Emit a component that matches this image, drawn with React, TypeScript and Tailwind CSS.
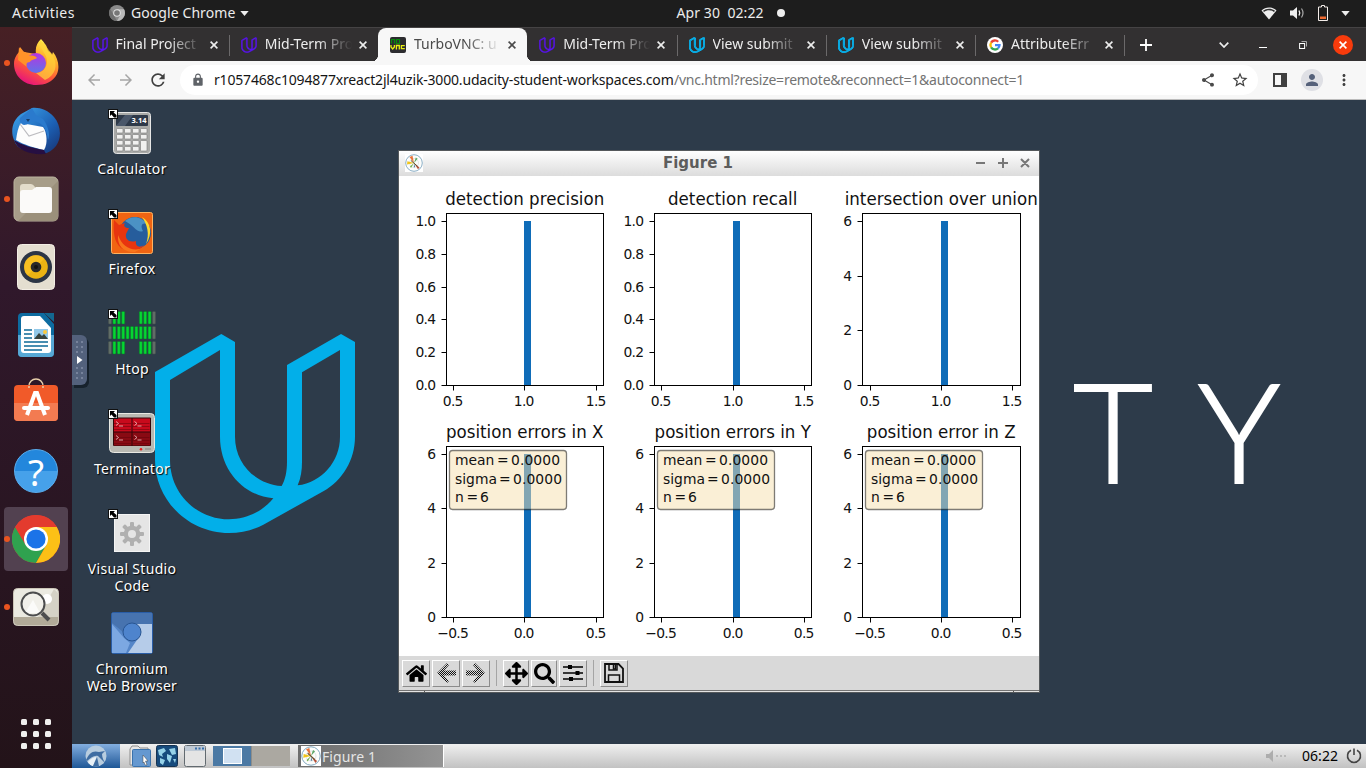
import React from "react";
import {
  MdArrowBack,
  MdArrowForward,
  MdLock,
  MdMoreVert,
  MdPerson,
  MdRefresh,
  MdShare,
  MdStarBorder,
} from "react-icons/md";
import { FaArrowsAlt, FaHome, FaSearch } from "react-icons/fa";

/* ---------- shared marks ---------- */

const U_PATH =
  "M45 156L244 42L285 66V350C285 430 345 492 425 498C436 478 441 455 441 425V135L603 42L645 66V350C645 420 608 480 550 514L370 614C340 630 305 639 267 639C145 639 45 540 45 420ZM90 180V420C90 520 170 598 267 598C320 598 370 573 400 535C310 527 240 450 240 350V90ZM486 157V425C486 450 483 473 473 496C545 487 600 425 600 350V90Z";

function UMark({ className }: { className: string }) {
  return (
    <svg viewBox="45 42 600 597" className={className} fill="currentColor" fillRule="evenodd">
      <path d={U_PATH} />
    </svg>
  );
}

function UFavicon({ color, bold }: { color: string; bold?: boolean }) {
  return (
    <svg viewBox="35 30 620 620" className="size-4" fill={color} stroke={color} strokeWidth={bold ? 38 : 14} fillRule="evenodd">
      <path d={U_PATH} />
    </svg>
  );
}

function NoVnc() {
  return (
    <svg viewBox="0 0 16 16" className="size-4">
      <rect width="16" height="16" rx="2" fill="#2c2c30" />
      <path d="M1.500 6.500V2.500H4.500V6.500M6.500 2.500H9.500V6.500H6.500Z" fill="none" stroke="#078c0c" strokeWidth="1.200" />
      <path d="M1 8V10L2.700 12L4.400 10V8M6.400 12.500V8.500H9.300V12.500M14.800 8.600H11.400V11.700H14.800" fill="none" stroke="#e8ef11" strokeWidth="1.300" />
    </svg>
  );
}

function GoogleMark() {
  return (
    <svg viewBox="0 0 16 16" className="size-4">
      <circle cx="8" cy="8" r="8" fill="#fff" />
      <g fill="none" strokeWidth="2.300">
        <path d="M4.100 5.700A4.500 4.500 0 0 1 11.200 4.800" stroke="#ea4335" />
        <path d="M4.100 10.300A4.500 4.500 0 0 1 4.100 5.700" stroke="#fbbc05" />
        <path d="M11 11.300A4.500 4.500 0 0 1 4.100 10.300" stroke="#34a853" />
        <path d="M8 8.200H12.500A4.500 4.500 0 0 1 11 11.300" stroke="#4285f4" />
      </g>
    </svg>
  );
}

function MplMark({ className }: { className: string }) {
  return (
    <svg viewBox="0 0 18 18" className={className}>
      <rect width="18" height="18" fill="#fff" />
      <circle cx="9" cy="9" r="8.300" fill="#fdfdfb" stroke="#7ea6bf" strokeWidth="0.900" />
      <circle cx="9" cy="9" r="4.500" fill="none" stroke="#c8d0d4" strokeWidth="0.500" />
      <path d="M9 9L4.500 3L7.500 1.800Z" fill="#e8743b" />
      <path d="M9 9L2 10.500L2.400 7.300Z" fill="#f0c419" />
      <path d="M9 9L10.800 3.500L12.700 4.800Z" fill="#5fa868" />
      <path d="M9 9L14.500 13.500L13 15.200Z" fill="#b5523a" />
      <path d="M9 9L6 14L5 12.500Z" fill="#6fae4e" />
      <path d="M9 9L8.800 13.600L10.200 13Z" fill="#5581a0" />
      <path d="M6 6.500L12.500 12.300" stroke="#65502c" strokeWidth="1" />
    </svg>
  );
}

/* ---------- GNOME top bar ---------- */

function TopBar() {
  return (
    <header className="flex h-[27px] shrink-0 items-center bg-[#1d1d1d] pb-px text-sm text-[#ececec]">
      <div className="w-[97px] pl-3 text-[14px] tracking-[0.450px]">Activities</div>
      <div className="flex flex-1 items-center">
        <svg viewBox="0 0 16 16" className="ml-3 size-4">
          <circle cx="8" cy="8" r="8" fill="#8a8a8a" />
          <path d="M8 4.200H15A8 8 0 0 1 8 16L11.300 10Z" fill="#b9b9b9" />
          <path d="M4.700 10L1.200 4A8 8 0 0 0 8 16Z" fill="#707070" />
          <circle cx="8" cy="8" r="3.800" fill="#e2e2e2" />
          <circle cx="8" cy="8" r="2.800" fill="#777" />
        </svg>
        <span className="ml-1.5 w-[104px] whitespace-nowrap tracking-[0.080px]">Google Chrome</span>
        <svg viewBox="0 0 10 6" className="ml-[5px] h-[5px] w-[9px]"><path d="M0 0H10L5 6Z" fill="#eee" /></svg>
      </div>
      <div className="mr-[-22px] ml-[22px] flex w-[140px] items-center whitespace-pre">
        <span className="w-[88px] tracking-[0.080px]">Apr 30  02:22</span>
        <span className="ml-3 size-2 rounded-full bg-[#eee]" />
      </div>
      <div className="flex flex-1 items-center justify-end gap-[13px] pr-[14px]">
        <svg viewBox="0 0 16 13" className="h-[13px] w-4">
          <path d="M.5 3.500C4.500-.4 11.500-.4 15.500 3.500L8 12.500Z" fill="#eee" />
          <path d="M2 3.800C5.500 1 10.500 1 14 3.800L13 5C10 2.500 6 2.500 3 5Z" fill="#333" />
        </svg>
        <svg viewBox="0 0 16 14" className="-ml-px h-3.5 w-4">
          <path d="M1 4.500H4L8 1V13L4 9.500H1Z" fill="#eee" />
          <path d="M10 4.500Q11.500 7 10 9.500" stroke="#eee" fill="none" strokeWidth="1.400" />
          <path d="M12.500 2.500Q15.500 7 12.500 11.500" stroke="#aaa" fill="none" strokeWidth="1.200" />
        </svg>
        <svg viewBox="0 0 10 16" className="h-4 w-2.5">
          <path d="M3.500 .5H6.500V2H9.500V15.500H.5V2H3.500Z" fill="none" stroke="#f3ece8" />
          <rect x="2" y="11.500" width="6" height="2.500" fill="#ee6a31" />
        </svg>
        <svg viewBox="0 0 10 6" className="mr-0.5 h-[5px] w-[9px]"><path d="M0 0H10L5 6Z" fill="#eee" /></svg>
      </div>
    </header>
  );
}

/* ---------- dock ---------- */

function FirefoxIcon() {
  return (
    <svg viewBox="0 0 46 48" className="mb-0.5 h-12 w-[46px]">
      <defs>
        <linearGradient id="ffx" x1="0.800" y1="0" x2="0.300" y2="1">
          <stop offset="0.050" stopColor="#fff44f" />
          <stop offset="0.350" stopColor="#ffb02b" />
          <stop offset="0.650" stopColor="#ff5a36" />
          <stop offset="1" stopColor="#e5107f" />
        </linearGradient>
        <linearGradient id="ffg" x1="0" y1="0" x2="0" y2="1">
          <stop offset="0" stopColor="#b833e1" />
          <stop offset="1" stopColor="#6173e8" />
        </linearGradient>
      </defs>
      <path d="M28 1C32 5 34 9 35 13C37 14 38 15 39 17L40 14C45 20 47 29 44 36C40 44 32 47 23 47C11 47 1 38 1 26C1 20 4 16 7 13L7 9L11 14L23 16C22 9 24 5 28 1Z" fill="url(#ffx)" />
      <circle cx="23" cy="25" r="10" fill="url(#ffg)" />
      <path d="M6 9L9 14C12 13 14 15 16 18C19 17 23 18 24 20C22 22 18 21 17 24C13 24 13 27 14 29L5 22Z" fill="#ff9229" />
      <path d="M27 2C25 10 34 15 34 23C34 30 29 35 23 35L32 42C43 37 45 27 40 18C39 15 34 11 33 7C31 6 28 4 27 2Z" fill="#ffd43b" opacity="0.700" />
    </svg>
  );
}

function ThunderbirdIcon() {
  return (
    <svg viewBox="0 0 48 48" className="size-12">
      <defs>
        <linearGradient id="tb" x1="0" y1="0" x2="1" y2="1">
          <stop offset="0" stopColor="#3fa8ee" />
          <stop offset="0.600" stopColor="#1c60b4" />
          <stop offset="1" stopColor="#17306f" />
        </linearGradient>
      </defs>
      <path d="M20 1C27 0 36 3 42 10C49 18 50 31 44 39C41 43 36 46 31 47C15 45 5 43 2 33C-2 23 1 13 9 7Z" fill="url(#tb)" />
      <path d="M9 16L31 20C35 25 36 37 32 43C23 41 12 38 4 33C5 26 6 20 9 16Z" fill="#fdfdfd" />
      <path d="M8 17L17 29L32 24" stroke="#bcbcc0" fill="none" strokeWidth="1.200" />
      <path d="M20 1L9 10C6 12 8 17 12 18C17 18 19 13 25 15C32 17 35 24 36 33C39 27 35 17 31 12L24 8Z" fill="#2a7acd" />
      <path d="M2 33C10 38 20 41 32 43L34 47C18 48 6 44 2 33Z" fill="#260f42" />
      <path d="M14 12L18 12L16 15Z" fill="#173e6b" />
    </svg>
  );
}

function FilesIcon() {
  return (
    <svg viewBox="0 0 46 46" className="size-[46px]">
      <rect x="1" y="1" width="44" height="44" rx="5" fill="#a79d89" stroke="#bcb49f" />
      <path d="M45 5V41Q45 45 41 45H5L45 5Z" fill="#9b907b" />
      <path d="M7 14V11Q7 8 10 8H18Q20 8 22 11L23 13H36V18H7Z" fill="#e3dccb" />
      <path d="M7 17Q7 14 10 14H19L23 11H36Q39 11 39 14V34Q39 37 36 37H10Q7 37 7 34Z" fill="#fbfaf9" />
    </svg>
  );
}

function RhythmboxIcon() {
  return (
    <svg viewBox="0 0 38 46" className="h-[46px] w-[38px]">
      <rect x="0.500" y="0.500" width="37" height="45" rx="4" fill="#e4ded0" stroke="#f3eee5" />
      <circle cx="19" cy="23" r="16" fill="#2c3545" />
      <circle cx="19" cy="23" r="11.800" fill="#ebb313" />
      <path d="M10.500 14.500A12 12 0 0 0 10.500 31.500L27.500 14.500A12 12 0 0 0 10.500 14.500Z" fill="#ffc72b" opacity="0.600" />
      <circle cx="19" cy="23" r="5.300" fill="#28282a" />
      <circle cx="19" cy="23" r="2" fill="#111" />
    </svg>
  );
}

function WriterIcon() {
  return (
    <svg viewBox="0 0 38 46" className="h-[46px] w-[38px]">
      <path d="M5 1H27L37 12V41Q37 45 33 45H5Q1 45 1 41V5Q1 1 5 1Z" fill="#0d6ba0" />
      <path d="M1 23H37V41Q37 45 33 45H5Q1 45 1 41Z" fill="#57a8d5" />
      <path d="M27 1H37V10Z" fill="#136790" />
      <path d="M7 4H23L34 16V38Q34 41 31 41H7Q4 41 4 38V7Q4 4 7 4Z" fill="#fff" />
      <path d="M7 18H15M7 22H15M7 26H15M7 30H31M7 34H31M7 38H25" stroke="#0c6998" strokeWidth="1.700" />
      <rect x="17" y="17" width="14" height="10" fill="#93c9e9" />
      <path d="M17 27L22 21L25 24L27 22L31 27Z" fill="#37433e" />
      <circle cx="28" cy="20" r="2" fill="#fdc93c" />
    </svg>
  );
}

function SoftwareIcon() {
  return (
    <svg viewBox="0 0 46 46" className="mb-1.5 size-[46px]">
      <path d="M16 11V9A7 7 0 0 1 30 9V11" fill="none" stroke="#e7cfab" strokeWidth="1.500" />
      <rect x="1" y="8" width="44" height="36" rx="4" fill="#f15a29" />
      <path d="M1 26H45V40Q45 44 41 44H5Q1 44 1 40Z" fill="#f37b51" />
      <path d="M16 11V9M30 9V11" fill="none" stroke="#e7cfab" strokeWidth="1.500" />
      <path d="M14 38L22 16H24L32 38" fill="none" stroke="#fff" strokeWidth="4" />
      <rect x="9" y="29" width="28" height="4" rx="2" fill="#fff" />
    </svg>
  );
}

function HelpIcon() {
  return (
    <div className="flex size-11 items-center justify-center rounded-full border border-[#59adee] bg-linear-to-b from-[#2387dc] from-50% to-[#46a1ea] to-50% text-[37px] leading-none text-white">
      ?
    </div>
  );
}

function ChromeIcon() {
  return (
    <svg viewBox="0 0 48 48" className="size-12">
      <circle cx="24" cy="24" r="24" fill="#e33b2e" />
      <path d="M3.200 12A24 24 0 0 0 24 48L34.400 30L24 24H10.200Z" fill="#2fa24f" />
      <path d="M44.800 12A24 24 0 0 1 24 48L34.400 30L24 12Z" fill="#fcc016" />
      <path d="M3.200 12A24 24 0 0 1 44.800 12H24L13.600 30Z" fill="#e33b2e" />
      <circle cx="24" cy="24" r="12" fill="#fff" />
      <circle cx="24" cy="24" r="9.600" fill="#1b73e8" />
    </svg>
  );
}

function ViewerIcon() {
  return (
    <svg viewBox="0 0 46 38" className="h-[38px] w-[46px]">
      <rect x="0.500" y="0.500" width="45" height="37" rx="4" fill="#ebeae1" stroke="#cbc6b8" />
      <path d="M45 5V29H25L41 1Z" fill="#d5d2c6" />
      <path d="M1 29H45V33Q45 37 41 37H5Q1 37 1 33Z" fill="#b1aa98" />
      <circle cx="34" cy="11" r="5" fill="#fff" />
      <path d="M12 25L20 12L27 25Z" fill="#fafaf7" />
      <circle cx="20" cy="16" r="11.500" fill="#fff" fillOpacity="0.300" stroke="#4c4d4e" strokeWidth="2" />
      <path d="M29 25L36 32" stroke="#4c4d4e" strokeWidth="4" />
    </svg>
  );
}

const dockItems: { icon: React.ReactNode; running?: boolean; active?: boolean }[] = [
  { icon: <FirefoxIcon />, running: true },
  { icon: <ThunderbirdIcon /> },
  { icon: <FilesIcon />, running: true },
  { icon: <RhythmboxIcon /> },
  { icon: <WriterIcon /> },
  { icon: <SoftwareIcon /> },
  { icon: <HelpIcon /> },
  { icon: <ChromeIcon />, running: true, active: true },
  { icon: <ViewerIcon />, running: true },
];

function Dock() {
  return (
    <aside className="flex w-[72px] shrink-0 flex-col items-center bg-linear-to-b from-[#472024] via-[#30182b] via-35% to-[#231319] pt-0.5">
      {dockItems.map((item, i) => (
        <div key={i} className="relative flex h-[68px] w-full items-center justify-center">
          {item.running && <span className="absolute left-1 z-10 size-1.5 rounded-full bg-[#e95420]" />}
          <div className={item.active ? "flex size-16 items-center justify-center rounded bg-[#524150]" : "flex size-16 items-center justify-center"}>
            {item.icon}
          </div>
        </div>
      ))}
      <div className="mt-auto mb-[19px] grid grid-cols-3 gap-1.5">
        {Array.from({ length: 9 }, (_, i) => (
          <span key={i} className="size-1.5 rounded-[1.500px] bg-[#f0efee]" />
        ))}
      </div>
    </aside>
  );
}

/* ---------- browser chrome ---------- */

const purple = "#5a14f0";
const cyan = "#08b0ea";

const tabs: { title: string; icon: React.ReactNode; active?: boolean; divider?: boolean }[] = [
  { title: "Final Project", icon: <UFavicon color={purple} />, divider: true },
  { title: "Mid-Term Pro", icon: <UFavicon color={purple} /> },
  { title: "TurboVNC: u", icon: <NoVnc />, active: true },
  { title: "Mid-Term Pro", icon: <UFavicon color={purple} />, divider: true },
  { title: "View submit", icon: <UFavicon color={cyan} bold />, divider: true },
  { title: "View submit", icon: <UFavicon color={cyan} bold />, divider: true },
  { title: "AttributeErr", icon: <GoogleMark />, divider: true },
];

function CloseGlyph({ className }: { className: string }) {
  return (
    <svg viewBox="0 0 8 8" className={className}>
      <path d="M.6 .6L7.400 7.400M7.400 .6L.6 7.400" stroke="currentColor" strokeWidth="1.600" />
    </svg>
  );
}

function Tab({ tab }: { tab: (typeof tabs)[number] }) {
  return (
    <div
      className={
        tab.active
          ? "relative flex h-[34px] w-[149.250px] items-center rounded-t-lg bg-[#f7f7f7] pl-3 text-[#4a4a4a] before:absolute before:bottom-0 before:-left-2 before:size-2 before:bg-[radial-gradient(circle_at_0_0,transparent_8px,#f7f7f7_8.500px)] after:absolute after:-right-2 after:bottom-0 after:size-2 after:bg-[radial-gradient(circle_at_100%_0,transparent_8px,#f7f7f7_8.500px)]"
          : "relative flex h-[34px] w-[149.250px] items-center pl-3 text-[#ededed]"
      }
    >
      {tab.icon}
      <span className="ml-2 w-[87px] mask-r-from-60% pb-0.5 text-[14px] whitespace-nowrap">{tab.title}</span>
      <CloseGlyph className="ml-[7px] size-2" />
      {tab.divider && <span className="absolute top-[7px] right-[-1px] h-[21px] w-px bg-[#6b696a]" />}
    </div>
  );
}

function TabStrip() {
  return (
    <div className="flex h-[34px] shrink-0 items-center border-t border-[#454344] bg-[#323031] pl-[7.500px]">
      {tabs.map((tab, i) => (
        <Tab key={i} tab={tab} />
      ))}
      <svg viewBox="0 0 12 12" className="ml-4 size-3"><path d="M6 0V12M0 6H12" stroke="#fff" strokeWidth="1.800" /></svg>
      <div className="flex flex-1 items-center justify-end pr-[13px] text-white">
        <svg viewBox="0 0 10 6" className="h-1.5 w-2.5"><path d="M.7 .7L5 5L9.300 .7" fill="none" stroke="#eee" strokeWidth="1.700" /></svg>
        <span className="mt-[5px] ml-[30px] h-px w-2 bg-white" />
        <svg viewBox="0 0 8 8" className="ml-8 size-2">
          <path d="M2.500 .5H7.500V5.500" fill="none" stroke="#aaa" />
          <rect x="0.600" y="2.500" width="5" height="5" fill="none" stroke="#fff" />
        </svg>
        <span className="ml-[26px] flex size-5 items-center justify-center rounded-full bg-[#f83b0c]">
          <CloseGlyph className="size-2" />
        </span>
      </div>
    </div>
  );
}

function AddressRow() {
  return (
    <div className="flex h-[39px] shrink-0 items-center border-b border-[#bcbcbc] bg-[#f7f7f7] pl-[13px]">
      <MdArrowBack className="size-[18px] text-[#a6a6a6]" />
      <MdArrowForward className="ml-3.5 size-[18px] text-[#a6a6a6]" />
      <MdRefresh className="ml-[13px] size-5 text-[#404040]" />
      <div className="ml-[12px] flex h-[30px] w-[1078px] items-center rounded-full bg-white pr-[9px] pl-[11px]">
        <MdLock className="size-[14px] text-[#5f6368]" />
        <div className="ml-[9px] flex-1 pb-0.5 text-[14px] whitespace-nowrap">
          <span className="inline-block w-[460px] tracking-[-0.180px] text-[#151515]">r1057468c1094877xreact2jl4uzik-3000.udacity-student-workspaces.com</span>
          <span className="tracking-[-0.250px] text-[#737373]">/vnc.html?resize=remote&amp;reconnect=1&amp;autoconnect=1</span>
        </div>
        <MdShare className="size-4 text-[#4a4a4a]" />
        <MdStarBorder className="ml-[15px] size-[18px] text-[#404040]" />
      </div>
      <svg viewBox="0 0 14 14" className="ml-[15px] size-3.5">
        <path d="M1 1H13V13H1Z" fill="none" stroke="#404040" strokeWidth="2" />
        <rect x="8" width="6" height="14" fill="#404040" />
      </svg>
      <span className="ml-3.5 flex size-[22px] items-center justify-center rounded-full bg-[#dfe0e5] text-[#55617a]">
        <MdPerson className="size-[18px]" />
      </span>
      <MdMoreVert className="ml-3 size-[18px] text-[#404040]" />
    </div>
  );
}

/* ---------- remote desktop ---------- */

function CalcIcon() {
  return (
    <svg viewBox="0 0 38 42" className="h-[42px] w-[38px]">
      <rect x="0.500" y="0.500" width="37" height="41" rx="3" fill="#a9aaa8" stroke="#e6e6e6" />
      <rect x="3" y="3" width="32" height="11" rx="1" fill="#2e3949" />
      <path d="M3 14L12 3H20L12 14Z" fill="#66758b" opacity="0.500" />
      <text x="33.500" y="11.300" textAnchor="end" fontSize="7.500" fontWeight="700" fill="#fff" textLength="15">3.14</text>
      {[0, 1, 2, 3].map((r) =>
        [0, 1, 2, 3].map((c) =>
          c === 3 && r === 3 ? null : (
            <rect key={`${r}${c}`} x={3.5 + c * 8} y={16.5 + r * 6} width="6.500" height={c === 3 && r === 2 ? 10.500 : 4.500} rx="0.800" fill="#f1f1f0" stroke="#777" strokeWidth="0.600" />
          ),
        )
      )}
    </svg>
  );
}

function OldFirefoxIcon() {
  return (
    <svg viewBox="0 0 42 42" className="size-[42px]">
      <rect x="0.500" y="0.500" width="41" height="41" rx="2" fill="#f06412" stroke="#ffb25f" />
      <circle cx="24" cy="21" r="16" fill="#265d9c" />
      <path d="M14 9C20 3 31 4 36 12C31 10 29 14 32 19C27 22 22 13 14 9Z" fill="#4b92c4" />
      <path d="M3 8L8 13L14 11C12 14 14 16 18 16L15 22C14 27 18 31 25 29C24 35 29 36 33 33C29 39 18 41 10 36C3 30 2 20 3 8Z" fill="#e8350f" />
      <path d="M31 5C40 10 42 22 35 32C39 22 36 12 31 5Z" fill="#ffd92b" />
      <path d="M7 23C11 34 19 39 29 37L24 40C13 41 6 34 7 23Z" fill="#f8761c" />
    </svg>
  );
}

function HtopIcon() {
  const cols = Array.from({ length: 11 }, (_, i) => i);
  return (
    <svg viewBox="0 0 48 44" className="h-11 w-12">
      {[0, 15, 30].map((y, row) =>
        cols.map((c) =>
          row !== 1 && c > 3 && c < 7 ? null : (
            <rect key={`${row}${c}`} x={0.5 + c * 4.4} y={y + 0.5} width="3" height="12.500" rx="0.700" fill={c === 0 || c === 10 ? "#606d66" : "#06d632"} stroke={c === 0 || c === 10 ? "#46514d" : "#087b28"} strokeWidth="0.500" />
          ),
        ),
      )}
    </svg>
  );
}

function TerminatorIcon() {
  return (
    <svg viewBox="0 0 46 40" className="h-10 w-[46px]">
      <rect x="0.500" y="0.500" width="45" height="39" rx="4" fill="#b9b9b2" stroke="#e9e9e3" />
      <rect x="4" y="4.500" width="38" height="28.500" rx="1" fill="#33070a" />
      {[[5, 5.500], [23.500, 5.500], [5, 19.500], [23.500, 19.500]].map(([x, y], i) => (
        <g key={i}>
          <rect x={x} y={y} width="17.500" height="13" fill={i < 2 ? "#c80a1c" : "#890a13"} />
          <path d={`M${x} ${y + 8}h17M${x} ${y + 5}h17M${x} ${y + 11}h17`} stroke="#61030b" strokeWidth="0.500" />
          <path d={`M${x + 2} ${y + 3}l2.500 2l-2.500 2M${x + 5} ${y + 7.500}h4`} fill="none" stroke="#f4c8c8" strokeWidth="0.800" />
        </g>
      ))}
      <circle cx="32" cy="36.300" r="1.300" fill="#eb2020" />
      <path d="M36 36H42" stroke="#85857e" />
    </svg>
  );
}

function GearIcon() {
  return (
    <svg viewBox="0 0 36 38" className="h-[38px] w-9">
      <rect x="0.500" y="0.500" width="35" height="37" fill="#e5e5e5" stroke="#f4f4f4" />
      <g transform="translate(18 20)" fill="#b0b0b0">
        {[0, 45, 90, 135].map((a) => (
          <rect key={a} x="-2" y="-12" width="4" height="24" rx="1" transform={`rotate(${a})`} />
        ))}
        <circle r="8.300" />
        <circle r="4" fill="#e5e5e5" />
      </g>
    </svg>
  );
}

function ChromiumIcon() {
  return (
    <svg viewBox="0 0 42 42" className="size-[42px]">
      <rect x="0.500" y="0.500" width="41" height="41" rx="2" fill="#5586c8" stroke="#295da7" />
      <path d="M1 12L13 26L19 31L15 41H1Z" fill="#7ca8e2" />
      <path d="M21 12H41V41H17L28 25Z" fill="#b6cce9" />
      <path d="M1 1H41V12H20L12 20L1 11Z" fill="#4773af" />
      <circle cx="21" cy="20" r="9" fill="#4e84cd" stroke="#285592" />
    </svg>
  );
}

const shortcuts: { label: string; icon: React.ReactNode; link?: boolean }[] = [
  { label: "Calculator", icon: <CalcIcon />, link: true },
  { label: "Firefox", icon: <OldFirefoxIcon />, link: true },
  { label: "Htop", icon: <HtopIcon />, link: true },
  { label: "Terminator", icon: <TerminatorIcon />, link: true },
  { label: "Visual Studio Code", icon: <GearIcon />, link: true },
  { label: "Chromium Web Browser", icon: <ChromiumIcon /> },
];

function Shortcuts() {
  return (
    <div className="absolute top-[9px] left-[10px] flex w-[100px] flex-col">
      {shortcuts.map((s) => (
        <div key={s.label} className="relative flex h-[100px] flex-col items-center">
          <div className="flex h-[47px] items-center justify-center">{s.icon}</div>
          {s.link && (
            <svg viewBox="0 0 10 10" className="absolute top-0 left-[26px] size-2.5">
              <rect x="0.500" y="0.500" width="9" height="9" fill="#fff" stroke="#111" />
              <path d="M2 2H7L5.500 3.500L8.500 6V8.500H6L3.500 5.500L2 7Z" fill="#000" />
            </svg>
          )}
          <div className="mt-1 text-center text-[14px] leading-[17px] tracking-[0.300px] text-white [text-shadow:1px_1px_1px_#000]">{s.label}</div>
        </div>
      ))}
    </div>
  );
}

/* ---------- figure ---------- */

interface Axes {
  title: string;
  left: number;
  right: number;
  top: number;
  bottom: number;
  bar: number;
  yTicks: [number, string][];
  xTicks: [number, string][];
  stats?: boolean;
}

const unit: [number, string][] = [[221.5, "1.0"], [254.5, "0.8"], [287.5, "0.6"], [319.5, "0.4"], [352.5, "0.2"], [385.5, "0.0"]];
const countTop: [number, string][] = [[221.5, "6"], [276.5, "4"], [330.5, "2"], [385.5, "0"]];
const countLow: [number, string][] = [[454.5, "6"], [508.5, "4"], [563.5, "2"], [617.5, "0"]];

const axes: Axes[] = [
  { title: "detection precision", left: 446.5, right: 603.5, top: 213.5, bottom: 385.5, bar: 524, yTicks: unit, xTicks: [[453.5, "0.5"], [524.5, "1.0"], [596.5, "1.5"]] },
  { title: "detection recall", left: 654.5, right: 811.5, top: 213.5, bottom: 385.5, bar: 733, yTicks: unit, xTicks: [[661.5, "0.5"], [733.5, "1.0"], [804.5, "1.5"]] },
  { title: "intersection over union", left: 862.5, right: 1020.5, top: 213.5, bottom: 385.5, bar: 941, yTicks: countTop, xTicks: [[870.5, "0.5"], [941.5, "1.0"], [1012.5, "1.5"]] },
  { title: "position errors in X", left: 446.5, right: 603.5, top: 446.5, bottom: 617.5, bar: 524, yTicks: countLow, xTicks: [[453.5, "−0.5"], [524.5, "0.0"], [596.5, "0.5"]], stats: true },
  { title: "position errors in Y", left: 654.5, right: 811.5, top: 446.5, bottom: 617.5, bar: 733, yTicks: countLow, xTicks: [[661.5, "−0.5"], [733.5, "0.0"], [804.5, "0.5"]], stats: true },
  { title: "position error in Z", left: 862.5, right: 1020.5, top: 446.5, bottom: 617.5, bar: 941, yTicks: countLow, xTicks: [[870.5, "−0.5"], [941.5, "0.0"], [1012.5, "0.5"]], stats: true },
];

function StatLine({ x, y, name, value, eq, val, end }: { x: number; y: number; name: string; value: string; eq: number; val: number; end: number }) {
  return (
    <text y={y}>
      <tspan x={x}>{name}</tspan>
      <tspan x={x + eq}>=</tspan>
      <tspan x={x + val} textLength={end - val}>{value}</tspan>
    </text>
  );
}

function Plot({ a }: { a: Axes }) {
  const barTop = a.yTicks[0][0] - 0.5;
  const cx = (a.left + a.right) / 2 - 0.3;
  return (
    <g fill="#111">
      <text transform={`translate(${cx} ${a.top - 8.5}) scale(1 1.09)`} textAnchor="middle" fontSize="16.670">{a.title}</text>
      <rect x={a.bar} y={barTop} width="7" height={a.bottom - barTop} fill="#0f6cb8" />
      <rect x={a.left} y={a.top} width={a.right - a.left} height={a.bottom - a.top} fill="none" stroke="#000" />
      {a.yTicks.map(([y, t]) => (
        <g key={t}>
          <path d={`M${a.left - 5} ${y}h5`} stroke="#000" />
          <text x={a.left - 10.5} y={y + 4.5} textAnchor="end" fontSize="13.890" textLength={t.length > 1 ? 20.5 : undefined}>{t}</text>
        </g>
      ))}
      {a.xTicks.map(([x, t]) => (
        <g key={t}>
          <path d={`M${x} ${a.bottom}v5`} stroke="#000" />
          <text x={x - 0.4} y={a.bottom + 20.5} textAnchor="middle" fontSize="13.890" textLength={t.length > 3 ? 31.5 : 20.5}>{t}</text>
        </g>
      ))}
      {a.stats && (
        <g fontSize="13.890">
          <rect x={a.left + 3} y={a.top + 4} width="117" height="59" rx="3" fill="#f5dfad" fillOpacity="0.500" stroke="#000" strokeOpacity="0.500" strokeWidth="1.300" />
          <StatLine x={a.left + 8.5} y={a.top + 18.5} name="mean" value="0.0000" eq={42} val={56} end={105} />
          <StatLine x={a.left + 8.5} y={a.top + 37.5} name="sigma" value="0.0000" eq={44} val={58} end={107} />
          <StatLine x={a.left + 8.5} y={a.top + 55.5} name="n" value="6" eq={11.5} val={25} end={34} />
        </g>
      )}
    </g>
  );
}

function ArrowGlyph({ flip }: { flip?: boolean }) {
  return (
    <svg viewBox="0 0 20 20" className={flip ? "size-5 -scale-x-100" : "size-5"}>
      <defs>
        <pattern id="dither" width="2" height="2" patternUnits="userSpaceOnUse">
          <rect width="1" height="1" fill="#111" />
          <rect x="1" y="1" width="1" height="1" fill="#111" />
        </pattern>
      </defs>
      <path d="M11 0L1 10L11 20L13 18L8 12.500H20V7.500H8L13 2Z" fill="url(#dither)" />
    </svg>
  );
}

function ToolButton({ children, narrow }: { children: React.ReactNode; narrow?: boolean }) {
  return (
    <span
      className={
        narrow
          ? "flex h-[27px] w-[26px] items-center justify-center border border-t-white border-r-[#8c8c8c] border-b-[#8c8c8c] border-l-white"
          : "flex h-[27px] w-7 items-center justify-center border border-t-white border-r-[#8c8c8c] border-b-[#8c8c8c] border-l-white"
      }
    >
      {children}
    </span>
  );
}

function FigureToolbar() {
  return (
    <div className="flex h-[34px] items-center gap-0.5 bg-[#d9d9d9] pl-[3px] text-black">
      <ToolButton><FaHome className="size-[21px]" /></ToolButton>
      <ToolButton><ArrowGlyph /></ToolButton>
      <ToolButton><ArrowGlyph flip /></ToolButton>
      <span className="mr-1 ml-1 h-[26px] w-px bg-[#a5a5a5]" />
      <ToolButton narrow><FaArrowsAlt className="size-[23px] shrink-0" /></ToolButton>
      <ToolButton narrow><FaSearch className="size-[21px]" /></ToolButton>
      <ToolButton>
        <svg viewBox="0 0 20 18" className="h-[18px] w-5">
          <path d="M0 3H20M0 9H20M0 15H20" stroke="#000" strokeWidth="1.600" />
          <path d="M5 1H9V5H5ZM12.500 7H16.500V11H12.500ZM6 13H10V17H6Z" />
        </svg>
      </ToolButton>
      <span className="mr-1 ml-1 h-[26px] w-px bg-[#a5a5a5]" />
      <ToolButton>
        <svg viewBox="0 0 20 20" className="size-5" fill="none" stroke="#111" strokeWidth="1.800">
          <path d="M1 1H14.500L19 5.500V19H1Z" />
          <path d="M5 1.500V7H13V1.500M4.500 19V12H15.500V19" strokeWidth="1.500" />
          <path d="M9.500 2V6H11.500V2" strokeWidth="1.500" />
        </svg>
      </ToolButton>
    </div>
  );
}

function FigureWindow() {
  return (
    <section className="absolute top-[50px] left-[326px] w-[642px] border border-[#55595c] bg-[#d9d9d9]">
      <div className="flex h-[25px] items-center bg-linear-to-b from-white to-[#dcdcdc] pr-[9px] pb-px pl-1.5">
        <MplMark className="size-[18px]" />
        <h1 className="flex-1 pr-[3px] text-center font-['DejaVu_Sans',sans-serif] text-[15px] font-bold text-[#5d5d5d]">Figure 1</h1>
        <svg viewBox="0 0 54 10" className="h-2.5 w-[54px]" stroke="#777" strokeWidth="2" fill="none">
          <path d="M0 5H9M22 5H32M27 0V10M45 1L53 9M53 1L45 9" />
        </svg>
      </div>
      <svg viewBox="399 176 640 480" className="block h-[480px] w-[640px] bg-white font-['DejaVu_Sans',sans-serif]">
        {axes.map((a) => (
          <Plot key={a.title} a={a} />
        ))}
      </svg>
      <FigureToolbar />
      <div className="flex h-0.5 border-t border-[#737373] bg-[#e4e4e4]">
        <span className="w-[26px] border-r border-[#555]" />
        <span className="flex-1" />
        <span className="w-[26px] border-l border-[#555]" />
      </div>
    </section>
  );
}

function Panel() {
  return (
    <footer className="flex h-6 shrink-0 items-center bg-linear-to-b from-[#f0f0f0] to-[#c2c2c2]">
      <span className="flex h-full w-12 items-center justify-center bg-linear-to-b from-[#83afe0] to-[#1d5796]">
        <svg viewBox="0 0 22 22" className="size-[22px]">
          <circle cx="11" cy="11" r="10.500" fill="#b8cddf" />
          <path d="M1 15C4 8 8 5 14 7L20 6L17 9C17 13 19 16 20 18L13 11C9 10 6 13 2 16Z" fill="#3f6da2" />
          <path d="M3 17Q7 12 11.500 12L8 21Q4.500 20 3 17Z" fill="#e9f1f7" />
          <path d="M12 12L8 21Q11 22 14 21Z" fill="#3f6da2" />
        </svg>
      </span>
      <svg viewBox="0 0 22 22" className="ml-[9px] size-[22px]">
        <path d="M1 20V4L3 1H9L11 3H19V20Z" fill="#e6e6e6" stroke="#8d8d8d" />
        <rect x="3.500" y="4.500" width="18" height="17" rx="1" fill="#6598d0" stroke="#3972ad" />
        <path d="M14 10L19 16L16.500 16L18 20L16 20L15 17L14 18Z" fill="#fff" stroke="#444" strokeWidth="0.500" />
      </svg>
      <svg viewBox="0 0 22 22" className="ml-[5px] size-[22px]">
        <rect x="0.500" y="0.500" width="21" height="21" rx="2" fill="#164b7d" stroke="#163351" />
        <path d="M2 5L8 3L10 6L6 9L7 12L3 10ZM13 4L19 3L20 9L16 10ZM11 9L16 11L14 18L11 14ZM4 13L9 15L7 20L4 18ZM17 14L20 14L19 18Z" fill="#96d2e8" />
      </svg>
      <svg viewBox="0 0 22 22" className="ml-1.5 size-[22px]">
        <rect x="0.500" y="0.500" width="21" height="21" rx="2" fill="#e4e4e4" stroke="#626a70" />
        <path d="M1 1H21V6H1Z" fill="#bec9d5" />
        <path d="M11 3.500H13M14.500 3.500H16.500M18 3.500H20" stroke="#376fac" strokeWidth="2" />
      </svg>
      <span className="ml-[7px] flex h-5 w-[38px] items-center justify-center bg-[#4b79a4]">
        <span className="h-4 w-[19px] border border-white bg-[#d1e1f2]" />
      </span>
      <span className="h-5 w-[39px] border-l border-[#8e8d89] bg-[#aba8a1]" />
      <span className="ml-2 flex h-[22px] w-[146px] items-center border-r border-white bg-linear-to-r from-[#6d6d6d] to-[#949494] pl-[3px] text-[14px] tracking-[0.100px] text-[#e5e5e5]">
        <MplMark className="mr-px size-5" />
        Figure 1
      </span>
      <span className="ml-auto flex items-center text-[14px] text-black">
        <svg viewBox="0 0 22 14" className="h-3.5 w-[22px]">
          <path d="M1 5H4L8 1V13L4 9H1Z" fill="#adadad" />
          <path d="M11 7H13M15 7H17M19 7H21" stroke="#999" />
        </svg>
        <span className="ml-[15px] w-9 pb-0.5 tracking-[0.050px]">06:22</span>
        <svg viewBox="0 0 16 16" className="mr-1 ml-2 size-4" fill="none" stroke="#444" strokeWidth="1.600">
          <path d="M5 2.200A6.500 6.500 0 1 0 11 2.200M8 .5V7" />
        </svg>
      </span>
    </footer>
  );
}

function RemoteDesktop() {
  return (
    <div className="relative flex-1 overflow-hidden bg-[#2d3b4a]">
      <UMark className="absolute top-[234px] left-[83px] h-[199px] w-[200px] text-[#02afe9]" />
      <span className="absolute top-[249px] left-[1001px] font-[Lato] text-[138px] leading-[162px] font-light text-white [-webkit-text-stroke:2px_white]">T</span>
      <span className="absolute top-[249px] left-[1126px] font-[Lato] text-[138px] leading-[162px] font-light text-white [-webkit-text-stroke:2px_white]">Y</span>
      <Shortcuts />
      <div className="absolute top-[235px] left-0 flex h-[50px] w-[15px] items-center justify-center rounded-r-md bg-[#53617c] shadow-[2px_3px_0_#17222d]">
        <svg viewBox="0 0 15 50" className="h-[50px] w-[15px]">
          {[7, 12, 17, 33, 38, 43].map((y) => (
            <path key={y} d={`M4 ${y}h2M9 ${y}h2`} stroke="#76829b" strokeWidth="2" />
          ))}
          <path d="M5 21L10.500 25L5 29Z" fill="#fff" />
        </svg>
      </div>
      <FigureWindow />
    </div>
  );
}

export default function App() {
  return (
    <div className="flex h-[768px] w-[1366px] flex-col overflow-hidden font-['Noto_Sans',sans-serif]">
      <TopBar />
      <div className="flex min-h-0 flex-1">
        <Dock />
        <main className="flex min-w-0 flex-1 flex-col">
          <TabStrip />
          <AddressRow />
          <RemoteDesktop />
          <Panel />
        </main>
      </div>
    </div>
  );
}
